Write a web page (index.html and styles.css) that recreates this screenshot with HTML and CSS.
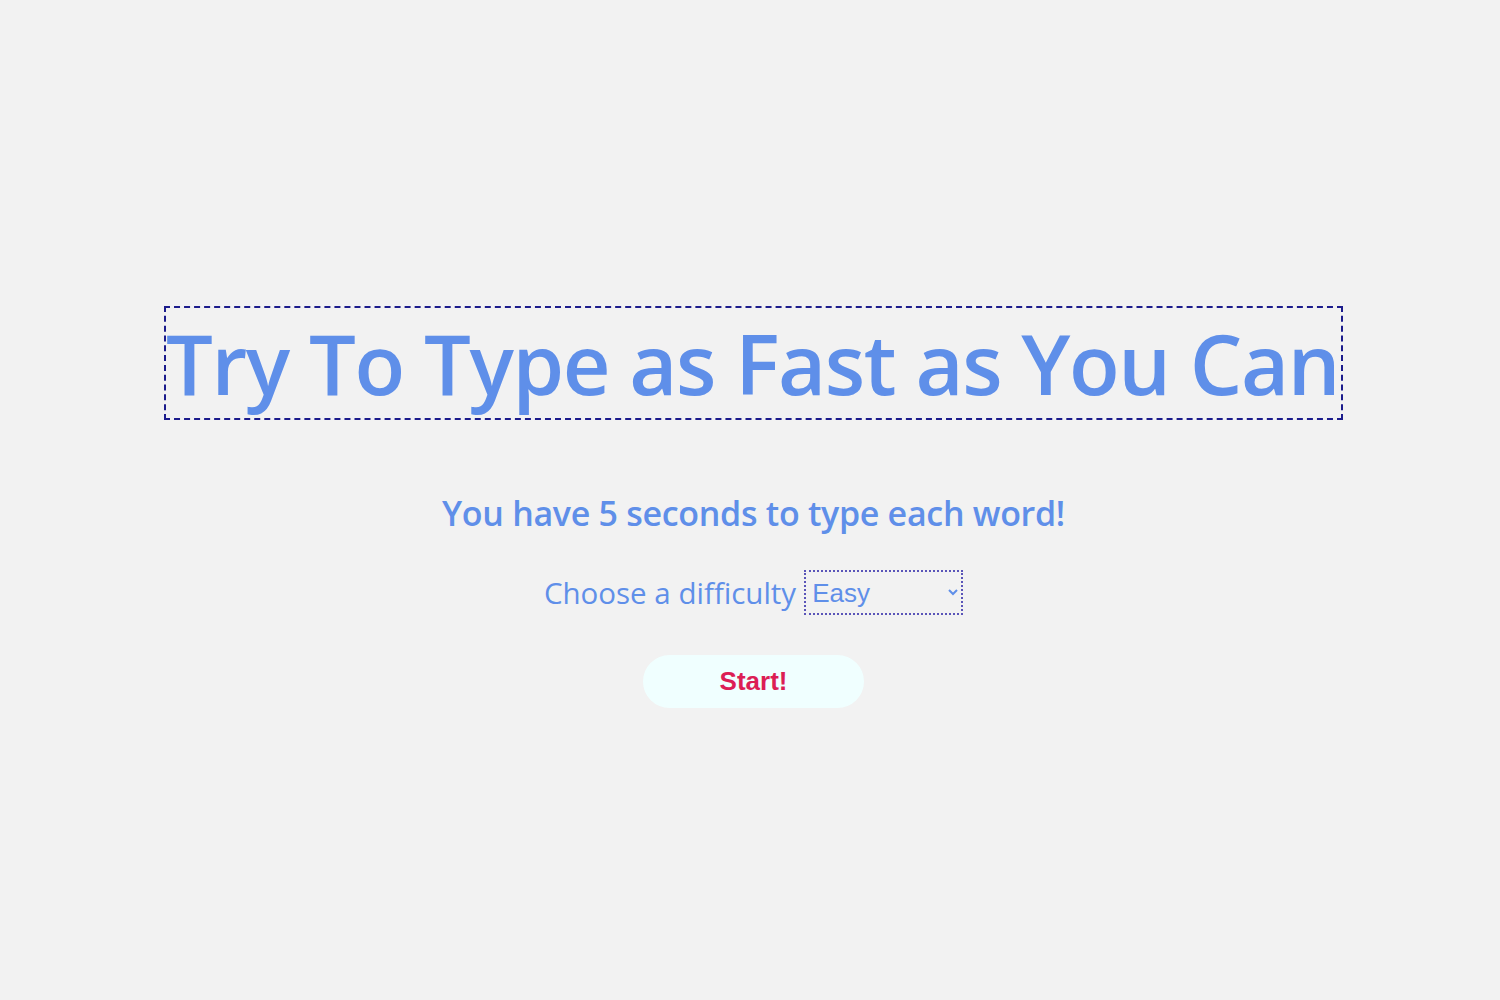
FILE: index.html
```html
<!DOCTYPE html>
<html lang="en">
<head>
<meta charset="utf-8">
<title>Typing Game</title>
<link rel="stylesheet" href="styles.css">
</head>
<body>
<main class="page">
  <h1 class="title">Try To Type as Fast as You Can</h1>
  <h2 class="subtitle">You have 5 seconds to type each word!</h2>
  <div class="difficulty">
    <label class="label" for="level">Choose a difficulty</label>
    <select class="select" id="level">
      <option>Easy</option>
      <option>Medium</option>
      <option>Hard</option>
    </select>
  </div>
  <button class="start">Start!</button>
</main>
</body>
</html>
```
FILE: styles.css
```css
html, body {
  margin: 0;
  padding: 0;
  background: #f2f2f2;
}
body {
  font-family: "Open Sans", "Noto Sans", sans-serif;
  color: #5f8fe9;
}
.page {
  min-height: 100vh;
  display: flex;
  flex-direction: column;
  align-items: center;
  justify-content: center;
  box-sizing: border-box;
  padding-top: 14px;
  padding-left: 7px;
}
.title {
  margin: 0;
  font-size: 83px;
  font-weight: 600;
  letter-spacing: -1.4px;
  line-height: 110px;
  border: 2px dashed #1c1c8c;
  padding: 0 2px 0 0;
  white-space: nowrap;
}
.subtitle {
  margin: 69px 0 0;
  font-size: 34px;
  font-weight: 600;
  letter-spacing: -0.3px;
  line-height: 48px;
}
.difficulty {
  margin-top: 33px;
  display: flex;
  align-items: center;
  gap: 8px;
}
.label {
  font-size: 29.5px;
  line-height: 40px;
}
.select {
  width: 159px;
  height: 45px;
  background: transparent;
  border: 2px dotted #5a55b8;
  color: #5f8fe9;
  font-family: "Liberation Sans", Arial, sans-serif;
  font-size: 26px;
  padding: 0 2px;
  border-radius: 0;
  outline: none;
}
.start {
  margin-top: 40px;
  width: 221px;
  height: 53px;
  border: none;
  border-radius: 27px;
  background: #f0ffff;
  color: #dc1e55;
  font-family: "Liberation Sans", Arial, sans-serif;
  font-weight: 700;
  font-size: 26px;
  cursor: pointer;
}
```
